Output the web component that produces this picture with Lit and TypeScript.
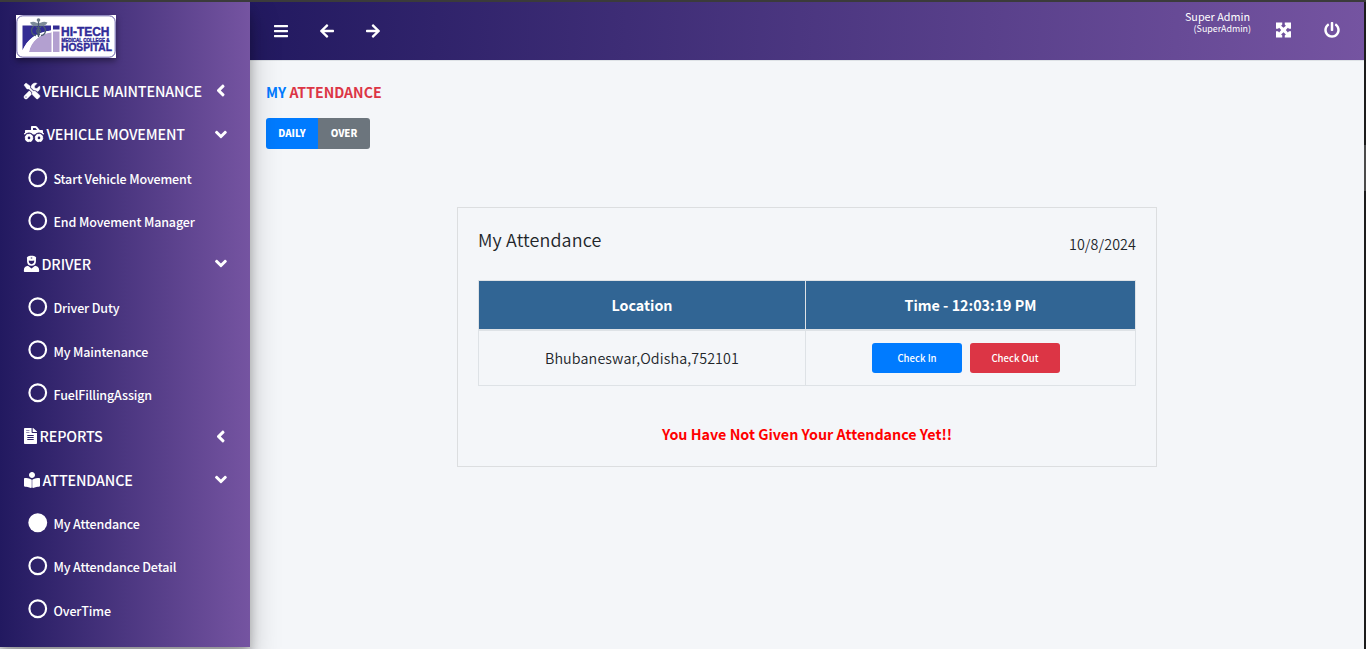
import { LitElement, html, css, svg } from "lit";
import { customElement, property } from "lit/decorators.js";
import { classMap } from "lit/directives/class-map.js";

const wheel = (cx: number) => svg`
  <circle cx=${cx} cy="380" r="84" fill="none" stroke="currentColor" stroke-width="84"/>
  <circle cx=${cx} cy="380" r="122" fill="none" stroke="currentColor" stroke-width="28" stroke-dasharray="54 41.8"/>`;

const icons: Record<string, { w: number; h?: number; body: unknown }> = {
  tools: { w: 512, body: svg`<path stroke="currentColor" stroke-width="14" d="M501.1 395.7L384 278.6c-23.1-23.1-57.6-27.6-85.4-13.9L192 158.1V96L64 0 0 64l96 128h62.1l106.6 106.6c-13.6 27.8-9.2 62.3 13.9 85.4l117.1 117.1c14.6 14.6 38.2 14.6 52.7 0l52.7-52.7c14.5-14.6 14.5-38.2 0-52.7zM331.7 225c28.3 0 54.9 11 74.9 31l19.4 19.4c15.8-6.9 30.8-16.5 43.8-29.5 37.1-37.1 49.7-89.3 37.9-136.7-2.2-9-13.5-12.1-20.1-5.5l-74.4 74.4-67.9-11.3L334 98.9l74.4-74.4c6.6-6.6 3.4-17.9-5.7-20.2-47.4-11.7-99.6.9-136.6 37.9-28.5 28.5-41.9 66.1-41.2 103.6l82.1 82.1c8.1-1.9 16.5-2.9 24.7-2.9zm-103.9 82l-56.7-56.7L18.7 402.8c-25 25-25 65.5 0 90.5s65.5 25 90.5 0l123.6-123.6c-7.6-19.9-9.9-41.6-5-62.7zM64 472c-13.2 0-24-10.8-24-24 0-13.3 10.7-24 24-24s24 10.700 24 24c0 13.200-10.700 24-24 24z"/>` },
  truck: { w: 640, body: svg`<path fill-rule="evenodd" d="M624 224h-16v-64c0-17.700-14.300-32-32-32h-73.600L419.200 24A64 64 0 0 0 369.200 0H256c-17.700 0-32 14.300-32 32v96H48c-8.800 0-16 7.200-16 16v80H16c-8.800 0-16 7.200-16 16v16c0 8.800 7.200 16 16 16h16.700c29.200-38.600 75.100-64 127.300-64s98.100 25.400 127.300 64h65.400c29.200-38.600 75.100-64 127.300-64s98.100 25.400 127.300 64H624c8.800 0 16-7.200 16-16v-16c0-8.800-7.200-16-16-16zM288 128V64h81.200l51.200 64z"/>${wheel(160)}${wheel(480)}` },
  driver: { w: 480, body: svg`<path fill-rule="evenodd" d="M92 48C132 6 186-6 240-6s108 12 148 54l-6 64v62c0 82-58 140-142 140S98 256 98 174v-62zM154 140v38c0 48 36 82 86 82s86-34 86-82v-38c-54 16-118 16-172 0zM216 46v34h48V46z"/><path d="M128 312l112 88 112-88c76 8 132 60 132 136v32c0 18-14 32-32 32H28c-18 0-32-14-32-32v-32c0-76 56-128 132-136z"/>` },
  file: { w: 416, body: svg`<path transform="scale(1.083 1)" d="M224 136V0H24C10.700 0 0 10.700 0 24v464c0 13.300 10.700 24 24 24h336c13.300 0 24-10.700 24-24V160H248c-13.200 0-24-10.800-24-24zm64 236c0 6.600-5.400 12-12 12H108c-6.600 0-12-5.400-12-12v-8c0-6.600 5.400-12 12-12h168c6.600 0 12 5.400 12 12v8zm0-64c0 6.600-5.400 12-12 12H108c-6.600 0-12-5.400-12-12v-8c0-6.600 5.400-12 12-12h168c6.600 0 12 5.400 12 12v8zm0-72v8c0 6.600-5.400 12-12 12H108c-6.600 0-12-5.400-12-12v-8c0-6.600 5.400-12 12-12h168c6.600 0 12 5.400 12 12zm96-114.100v6.100H256V0h6.100c6.400 0 12.500 2.500 17 7l97.900 98c4.500 4.500 7 10.600 7 16.900zM64 72v16h96V72zm0 56v16h96v-16z" fill-rule="evenodd"/>` },
  reader: { w: 512, body: svg`<path d="M352 96c0-53-43-96-96-96s-96 43-96 96 43 96 96 96 96-43 96-96zM233.600 241.100c-59.300-36.300-155.300-46.200-203.800-49C13.600 191.200 0 203.500 0 219.100v222.800c0 14.300 11.600 26.300 26.500 27.100 43.700 2.300 131.600 11.100 192.400 41.300 9.300 4.600 20.200-1.900 20.200-12V252.600c0-4.600-2-8.900-5.500-11.500zm248.600-49c-48.500 2.700-144.500 12.700-203.800 49-3.500 2.600-5.500 6.900-5.500 11.500v245.700c0 10.200 10.900 16.600 20.200 12 60.800-30.200 148.700-38.900 192.400-41.200 14.900-.8 26.500-12.800 26.500-27.100V219.100c0-15.600-13.600-27.900-29.800-27z"/><path d="M232 250h48v246h-48z" opacity="0.700"/>` },
  left: { w: 256, body: svg`<path d="M31.700 239l136-136c9.400-9.400 24.600-9.400 33.900 0l22.600 22.600c9.400 9.400 9.400 24.600 0 33.900L127.900 256l96.400 96.400c9.400 9.400 9.400 24.600 0 33.900L201.700 409c-9.400 9.400-24.600 9.400-33.900 0l-136-136c-9.500-9.400-9.500-24.600-.1-34z"/>` },
  down: { w: 320, body: svg`<path d="M143 352.300L7 216.300c-9.400-9.400-9.400-24.600 0-33.900l22.600-22.600c9.400-9.400 24.600-9.400 33.900 0l96.400 96.400 96.400-96.400c9.400-9.400 24.600-9.400 33.900 0l22.600 22.600c9.400 9.400 9.400 24.600 0 33.900l-136 136c-9.200 9.400-24.400 9.400-33.800 0z"/>` },
  bars: { w: 448, body: svg`<path d="M16 132h416c8.800 0 16-7.200 16-16V76c0-8.800-7.200-16-16-16H16C7.200 60 0 67.200 0 76v40c0 8.800 7.200 16 16 16zm0 160h416c8.800 0 16-7.200 16-16v-40c0-8.800-7.200-16-16-16H16c-8.800 0-16 7.200-16 16v40c0 8.800 7.200 16 16 16zm0 160h416c8.800 0 16-7.200 16-16v-40c0-8.800-7.200-16-16-16H16c-8.800 0-16 7.200-16 16v40c0 8.800 7.200 16 16 16z"/>` },
  back: { w: 448, body: svg`<path d="M257.500 445.100l-22.200 22.200c-9.400 9.400-24.600 9.400-33.900 0L7 273c-9.400-9.400-9.400-24.600 0-33.900L201.400 44.700c9.400-9.400 24.600-9.400 33.900 0l22.200 22.200c9.500 9.500 9.300 25-.4 34.300L136.600 216H424c13.300 0 24 10.700 24 24v32c0 13.300-10.700 24-24 24H136.600l120.500 114.800c9.800 9.300 10 24.800.4 34.300z"/>` },
  forward: { w: 448, body: svg`<path d="M190.500 66.900l22.200-22.200c9.400-9.400 24.600-9.400 33.900 0L441 239c9.400 9.400 9.400 24.600 0 33.900L246.600 467.300c-9.400 9.400-24.600 9.400-33.900 0l-22.200-22.200c-9.500-9.500-9.300-25 .4-34.300L311.400 296H24c-13.300 0-24-10.700-24-24v-32c0-13.300 10.700-24 24-24h287.400L190.900 101.200c-9.800-9.300-10-24.800-.4-34.300z"/>` },
  expand: { w: 480, body: svg`<path d="M0 16h200v64l-36 36 76 66 76-66-36-36V16h200v200h-64l-36-36-66 76 66 76 36-36h64v200H280v-64l36-36-76-66-76 66 36 36v64H0V296h64l36 36 66-76-66-76-36 36H0z"/>` },
  power: { w: 512, body: svg`<path d="M400 54.100c63 45 104 118.600 104 201.900 0 136.800-110.800 247.700-247.500 248C120 504.300 8.200 393 8 256.400 7.900 173.100 48.900 99.300 111.800 54.200c11.700-8.300 28-4.800 35 7.700L162.600 90c5.900 10.500 3.100 23.800-6.600 31-41.500 30.800-68 79.600-68 134.900-.1 92.300 74.500 168.100 168 168.100 91.600 0 168.600-74.200 168-169.100-.3-51.800-24.700-101.800-68.100-134-9.700-7.200-12.400-20.500-6.500-30.900l15.800-28.100c7-12.400 23.200-16.100 34.800-7.800zM296 264V24c0-13.300-10.700-24-24-24h-32c-13.300 0-24 10.700-24 24v240c0 13.300 10.700 24 24 24h32c13.300 0 24-10.700 24-24z"/>` },
  ring: { w: 512, body: svg`<circle cx="256" cy="256" r="219" fill="none" stroke="currentColor" stroke-width="56"/>` },
  dot: { w: 512, body: svg`<circle cx="256" cy="256" r="248"/>` },
};

@customElement("fa-icon")
class FaIcon extends LitElement {
  @property() name = "";
  @property({ type: Number }) size = 16;
  static styles = css`
    :host { display: inline-flex; flex: none; }
    svg { display: block; fill: currentColor; overflow: visible; }
  `;
  render() {
    const i = icons[this.name];
    return html`<svg width=${(this.size * i.w) / 512} height=${this.size} viewBox="0 0 ${i.w} 512">${i.body}</svg>`;
  }
}

@customElement("hospital-logo")
class HospitalLogo extends LitElement {
  static styles = css`
    :host { display: block; width: 100px; height: 43px; box-shadow: 0 3px 6px rgba(0, 0, 0, 0.4); }
    svg { display: block; font-family: "Liberation Sans", Arial, sans-serif; font-weight: 700; }
  `;
  render() {
    return html`<svg width="100" height="43" viewBox="0 0 100 43">
      <rect width="100" height="43" fill="#fff"/>
      <rect x="0.800" y="0.800" width="98.400" height="41.400" rx="6" fill="#fff" stroke="#50459a" stroke-width="0.900"/>
      <path d="M6.500 10.500H35v5C19 18 11 26 6.500 35z" fill="#332d94"/>
      <path d="M13 37c2-11 11-18.500 22.500-20V37z" fill="#b3a0d0"/>
      <path d="M6.500 37C10 24 21 17 35.500 15.500v2C24 19 15 26 13 37z" fill="#fff"/>
      <rect x="37" y="10.500" width="6.500" height="4" fill="#332d94"/>
      <path d="M37 16.500h6.500V37H37z" fill="#b3a0d0"/>
      <path d="M14 7.500c4-2 6 0 8.500 1 2.500-1 5-3 9-1-1.500 3.500-5 4-9 3.500-3.500.5-7 0-8.500-3.500z" fill="#7d8b99"/>
      <g fill="none" stroke="#4c5c70" stroke-width="1.300">
        <path d="M22.500 4v18"/>
        <path d="M18 11c-4 3-3 9 2 9.500M27 11c4 3 3 9-2 9.500M20 12c5 2 6 5 1 8M25 12c-5 2-6 5-1 8"/>
      </g>
      <circle cx="22.500" cy="5" r="1.800" fill="#6b7988"/>
      <g fill="#302b98" stroke="#302b98" stroke-width="0.400">
        <text x="45" y="21" font-size="12" textLength="48.500" lengthAdjust="spacingAndGlyphs">HI-TECH</text>
        <text x="45.500" y="26.800" font-size="5.200" textLength="48" lengthAdjust="spacingAndGlyphs">MEDICAL COLLEGE &amp;</text>
        <text x="45" y="36.300" font-size="10.500" textLength="51" lengthAdjust="spacingAndGlyphs">HOSPITAL</text>
      </g>
    </svg>`;
  }
}

interface Item { label: string; icon?: string; open?: boolean; active?: boolean }

const menu: Item[] = [
  { label: "VEHICLE MAINTENANCE", icon: "tools", open: false },
  { label: "VEHICLE MOVEMENT", icon: "truck", open: true },
  { label: "Start Vehicle Movement" },
  { label: "End Movement Manager" },
  { label: "DRIVER", icon: "driver", open: true },
  { label: "Driver Duty" },
  { label: "My Maintenance" },
  { label: "FuelFillingAssign" },
  { label: "REPORTS", icon: "file", open: false },
  { label: "ATTENDANCE", icon: "reader", open: true },
  { label: "My Attendance", active: true },
  { label: "My Attendance Detail" },
  { label: "OverTime" },
];

@customElement("app-root")
class AppRoot extends LitElement {
  static styles = css`
    :host {
      display: block; box-sizing: border-box; width: 1366px; height: 649px; overflow: hidden;
      border-top: 2px solid #3b3b3b; background: #f4f6f9; color: #212529;
      font-family: "Noto Sans CJK SC", "Source Sans Pro", sans-serif; font-size: 14.3px;
    }
    * { box-sizing: border-box; }
    .shell { display: grid; grid-template-columns: 250px 1fr 2px; height: 647px; }
    .side {
      height: 645px; color: #fff; z-index: 1;
      background: linear-gradient(90deg, #221960, #7554a1);
      box-shadow: 0 14px 28px rgba(0, 0, 0, 0.25), 0 10px 10px rgba(0, 0, 0, 0.22);
    }
    .brand { height: 67.300px; padding: 13px 0 0 16px; }
    .row { display: flex; align-items: center; height: 43.200px; padding: 0 22px 0 23.500px; white-space: nowrap; }
    .parent { font-size: 14.3px; gap: 3px; line-height: 20px; letter-spacing: -0.12px; font-weight: 500; }
    .parent .chev { margin-left: auto; width: 15px; display: flex; justify-content: center; }
    .child { font-size: 12.5px; gap: 6px; padding-left: 28px; font-weight: 500; letter-spacing: -0.14px; }
    .child span { padding-top: 2px; }
    .main { display: flex; flex-direction: column; min-width: 0; }
    .top {
      display: flex; align-items: center; height: 59px; padding: 0 24px; color: #fff;
      background: linear-gradient(92deg, #221960, #7554a1); border-bottom: 1px solid #dee2e6;
    }
    .left { display: flex; gap: 32px; }
    .right { display: flex; align-items: center; margin: 0 0 2px auto; }
    .user { display: flex; flex-direction: column; align-items: flex-end; margin: 0 25px 16px 0; white-space: nowrap; }
    .uname { font-size: 10.800px; line-height: 13px; padding-right: 1px; }
    .role { font-size: 8.900px; line-height: 11px; }
    .right fa-icon + fa-icon { margin-left: 33px; }
    .content { padding: 21px 16px; }
    .title { margin: 0; font-size: 14.100px; line-height: 20px; font-weight: 700; color: #dc3545; white-space: nowrap; }
    .title span { color: #007bff; }
    .tabs { display: flex; width: 104px; height: 31px; margin-top: 16px; border-radius: 3px; overflow: hidden; color: #fff; font-size: 9.700px; font-weight: 900; }
    .tab { flex: 1; display: flex; align-items: center; justify-content: center; padding-bottom: 2px; background: #6c757d; }
    .tab.on { background: #007bff; }
    .card { width: 700px; height: 260px; margin: 58px auto 0; padding: 0 20px; border: 1px solid #dcdee0; }
    .head { display: flex; justify-content: space-between; height: 72px; font-weight: 350; }
    .h { font-size: 17.900px; line-height: 26px; padding-top: 18px; letter-spacing: 0.150px; }
    .date { font-size: 14.300px; line-height: 24px; padding-top: 24px; letter-spacing: 0.100px; }
    table { width: 658px; border-collapse: collapse; table-layout: fixed; }
    th, td { border: 1px solid #dee2e6; padding: 0; text-align: center; }
    th { height: 49px; background: #316594; color: #fff; font-size: 14.300px; font-weight: 700; border-bottom-width: 2px; }
    td { height: 56px; font-weight: 350; letter-spacing: 0.120px; }
    .c1 { width: 327px; }
    .btns { display: flex; justify-content: center; gap: 8px; padding-right: 9px; letter-spacing: 0; }
    .btn { display: flex; align-items: center; justify-content: center; width: 90px; height: 30px; border-radius: 3px; color: #fff; font-size: 9.600px; font-weight: 500; background: #007bff; }
    .btn.out { background: #dc3545; }
    .msg { margin-top: 37px; line-height: 22px; text-align: center; font-size: 14.300px; font-weight: 700; color: #f00; }
    .scroll { background: #1c1c1c; }
    .thumb { height: 46px; margin-top: 143px; background: #4b4b4b; }
  `;

  private row(i: Item) {
    const parent = !!i.icon;
    return html`<div class=${classMap({ row: true, parent, child: !parent })}>
      <fa-icon name=${i.icon ?? (i.active ? "dot" : "ring")} size=${parent ? 16 : 19.5}></fa-icon>
      <span>${i.label}</span>
      ${parent ? html`<div class="chev"><fa-icon name=${i.open ? "down" : "left"} size="19"></fa-icon></div>` : ""}
    </div>`;
  }

  render() {
    return html`<div class="shell">
      <nav class="side">
        <div class="brand"><hospital-logo></hospital-logo></div>
        ${menu.map((i) => this.row(i))}
      </nav>
      <div class="main">
        <header class="top">
          <div class="left">
            <fa-icon name="bars"></fa-icon><fa-icon name="back"></fa-icon><fa-icon name="forward"></fa-icon>
          </div>
          <div class="right">
            <div class="user"><span class="uname">Super Admin</span><span class="role">(SuperAdmin)</span></div>
            <fa-icon name="expand"></fa-icon><fa-icon name="power"></fa-icon>
          </div>
        </header>
        <main class="content">
          <h1 class="title"><span>MY</span> ATTENDANCE</h1>
          <div class="tabs"><div class="tab on">DAILY</div><div class="tab">OVER</div></div>
          <section class="card">
            <div class="head"><div class="h">My Attendance</div><div class="date">10/8/2024</div></div>
            <table>
              <colgroup><col class="c1" /><col /></colgroup>
              <tr><th>Location</th><th>Time - 12:03:19 PM</th></tr>
              <tr>
                <td>Bhubaneswar,Odisha,752101</td>
                <td><div class="btns"><div class="btn">Check In</div><div class="btn out">Check Out</div></div></td>
              </tr>
            </table>
            <div class="msg">You Have Not Given Your Attendance Yet!!</div>
          </section>
        </main>
      </div>
      <div class="scroll"><div class="thumb"></div></div>
    </div>`;
  }
}
